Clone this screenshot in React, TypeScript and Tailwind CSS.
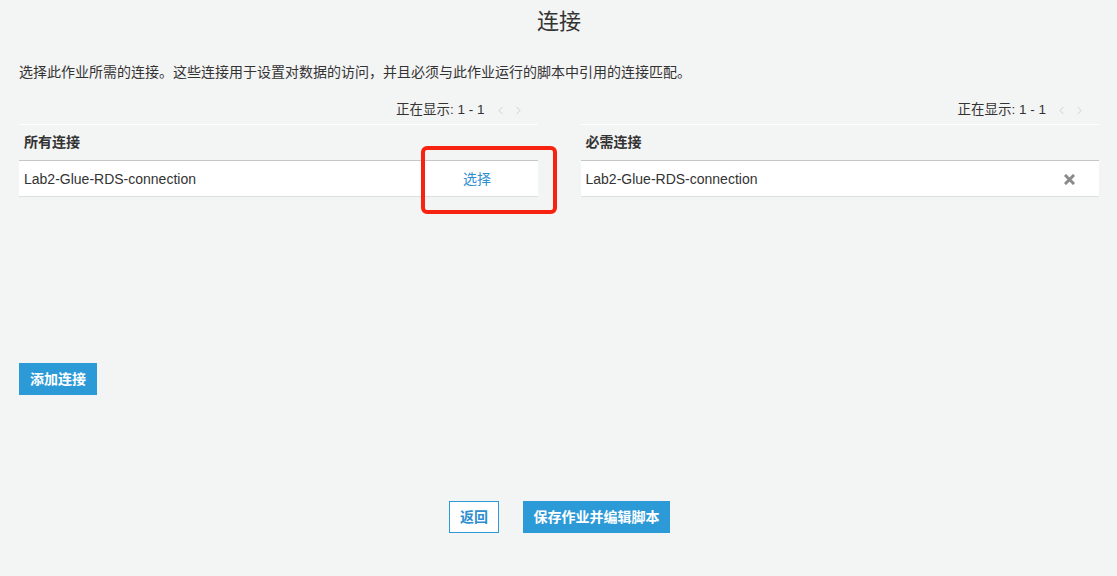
import React from 'react';
import { ChevronLeft, ChevronRight } from 'lucide-react';

interface Connection {
  id: string;
  name: string;
}

const font = { fontFamily: '"Liberation Sans", "Noto Sans CJK SC", sans-serif' };

const Pager = () => (
  <div className="flex items-center justify-end h-5 pr-[13px] text-[13.5px] text-[#333]">
    <span>正在显示: 1 - 1</span>
    <ChevronLeft className="ml-[9px] h-[13px] w-[13px] text-[#c8c8c8]" strokeWidth={1.5} />
    <ChevronRight className="ml-[5px] h-[13px] w-[13px] text-[#c8c8c8]" strokeWidth={1.5} />
  </div>
);

const RemoveIcon = () => (
  <svg width="11" height="11" viewBox="0 0 11 11">
    <path d="M2 2 L9 9 M9 2 L2 9" stroke="#8a8a8a" strokeWidth="3" strokeLinecap="square" />
  </svg>
);

const App = () => {
  const all: Connection[] = [{ id: '1', name: 'Lab2-Glue-RDS-connection' }];
  const required: Connection[] = [{ id: '1', name: 'Lab2-Glue-RDS-connection' }];

  return (
    <div className="relative min-h-[576px] bg-[#f3f4f4] pl-[19px] pr-[18px] text-[#333]" style={font}>
      <h1 className="pt-[8px] text-center text-[22px] leading-[28px] font-normal">连接</h1>

      <p className="mt-[26px] text-[14px] leading-5">
        选择此作业所需的连接。这些连接用于设置对数据的访问，并且必须与此作业运行的脚本中引用的连接匹配。
      </p>

      <div className="mt-[18px] grid grid-cols-2 gap-[43px]">
        {/* All connections */}
        <div>
          <Pager />
          <div className="mt-1">
            <div className="flex h-[37px] items-center border-t border-white border-b border-b-[#c6c6c6] px-[5px] text-[14px] font-bold">
              所有连接
            </div>
            {all.map((c) => (
              <div key={c.id} className="flex h-9 items-center border-b border-[#dedede] bg-white pt-[1px] text-[14px]">
                <span className="flex-1 pl-[5px]">{c.name}</span>
                <button className="w-[121px] text-center text-[#2e8fd2]">选择</button>
              </div>
            ))}
          </div>
        </div>

        {/* Required connections */}
        <div>
          <Pager />
          <div className="mt-1">
            <div className="flex h-[37px] items-center border-t border-white border-b border-b-[#c6c6c6] px-[5px] text-[14px] font-bold">
              必需连接
            </div>
            {required.map((c) => (
              <div key={c.id} className="flex h-9 items-center border-b border-[#dedede] bg-white pt-[1px] text-[14px]">
                <span className="flex-1 pl-[5px]">{c.name}</span>
                <button className="flex w-[60px] justify-center pl-[1px]">
                  <RemoveIcon />
                </button>
              </div>
            ))}
          </div>
        </div>
      </div>

      <button className="mt-[166px] h-8 px-[11px] bg-[#2d9ad8] text-[14px] font-bold text-white">
        添加连接
      </button>

      <div className="mt-[106px] flex justify-center gap-6 pl-[1px]">
        <button className="h-8 w-[50px] border border-[#2d9ad8] bg-white text-[14px] font-bold text-[#2d8fd0]">
          返回
        </button>
        <button className="h-8 w-[147px] bg-[#2d9ad8] text-[14px] font-bold text-white">
          保存作业并编辑脚本
        </button>
      </div>

      {/* annotation highlight */}
      <div className="pointer-events-none absolute left-[421px] top-[146px] h-[68px] w-[136px] rounded-[6px] border-[4px] border-[#f5230f]" />
    </div>
  );
};

export default App;
